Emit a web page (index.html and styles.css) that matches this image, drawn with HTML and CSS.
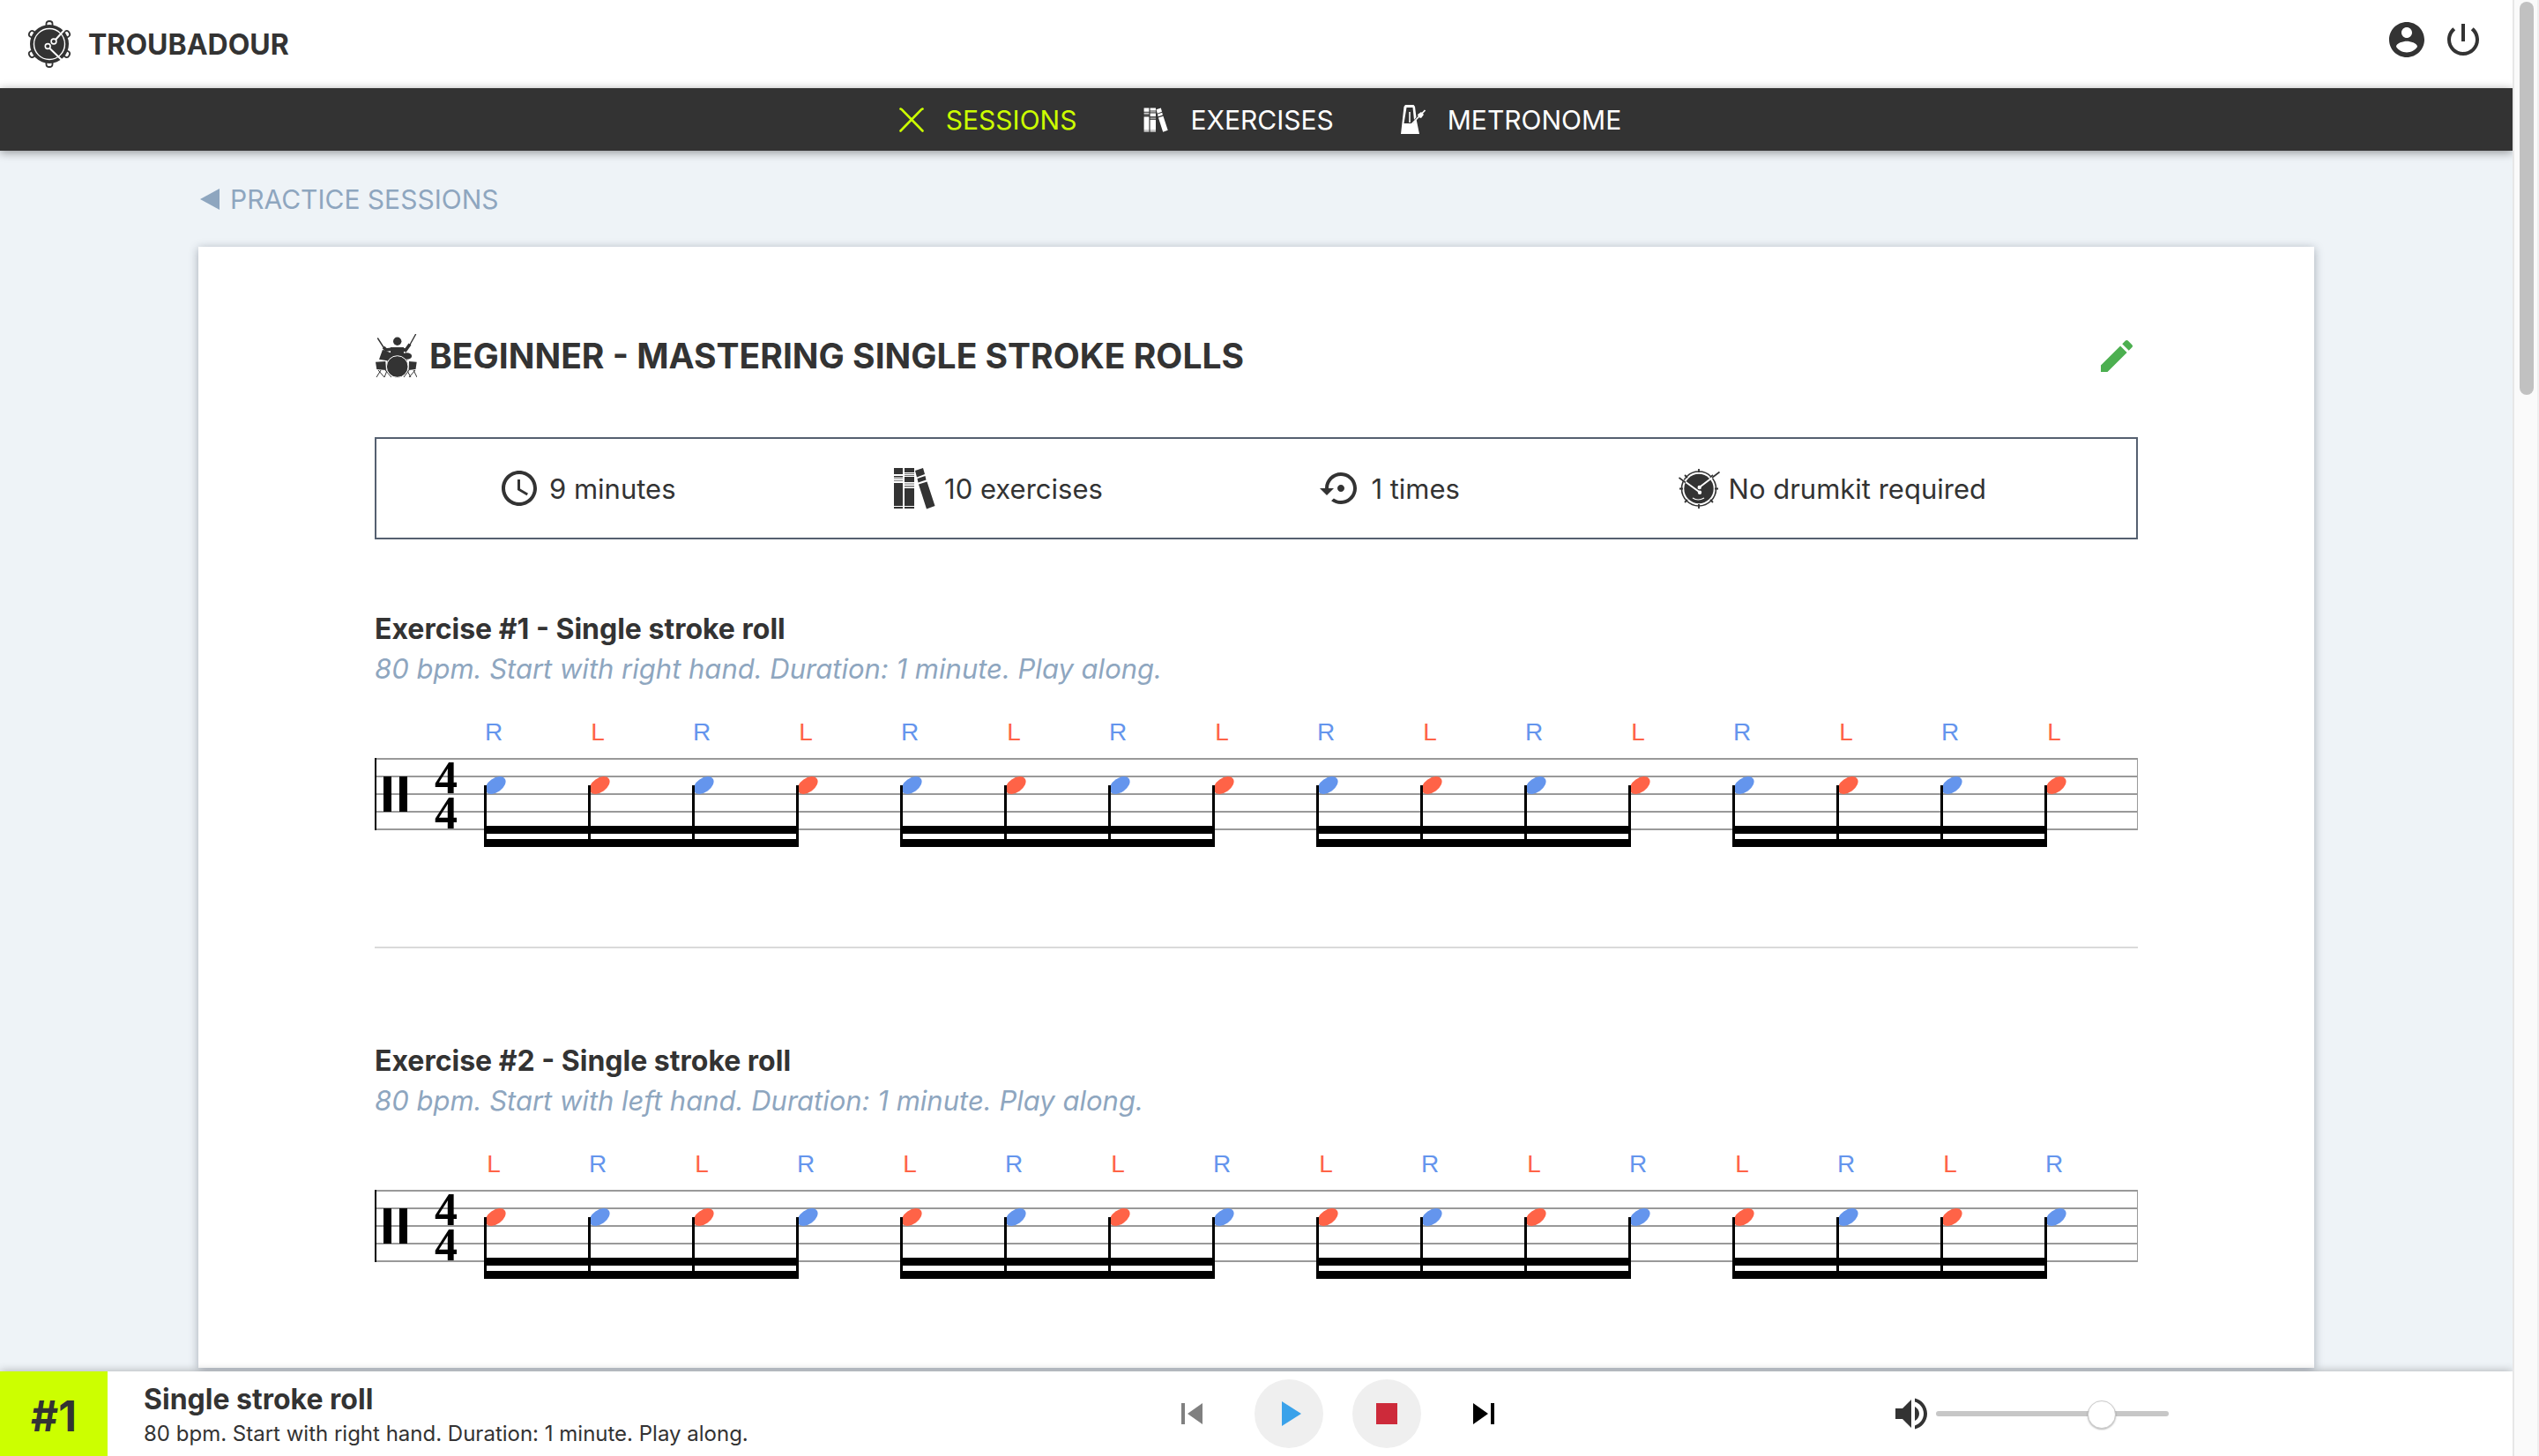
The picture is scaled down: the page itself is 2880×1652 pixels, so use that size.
FILE: index.html
```html
<!DOCTYPE html>
<html lang="en">
<head>
<meta charset="utf-8">
<title>Troubadour</title>
<link rel="stylesheet" href="styles.css">
</head>
<body>
<svg class="sprite" aria-hidden="true">
  <symbol id="i-books" viewBox="0 0 48 48">
    <path d="M1 1h10v7H1zM1 10h10v1.500H1zM1 18h10v26H1zM1 45h10v2H1z"/>
    <path d="M1 12.500h10v1H1zM1 15h10v1H1z" opacity=".6"/>
    <path d="M13 1h11v5H13zM13 11h11v6H13zM13 24h11v20H13zM13 45h11v2H13z"/>
    <path d="M13 7h11v1H13zM13 9h11v1H13zM13 18.500h11v1H13zM13 21h11v1.500H13z" opacity=".7"/>
    <path d="M25 4l9-3 2 7-9 3.500zM27.500 13l9-3 1 4.500-9 3zM29 19.500l9.500-3L47.500 44l-9.500 3.500z"/>
  </symbol>
</svg>
<div class="app">
  <div class="shell">
    <header class="topbar">
      <a class="brand" href="#">
        <svg class="logo" viewBox="0 0 50 54" fill="none">
          <g id="lugs" stroke="#333" stroke-width="1.800">
            <path d="M21.500 6V3.800Q21.500 1 25 1t3.500 2.800V6"/>
            <path d="M21.500 6V3.800Q21.500 1 25 1t3.500 2.800V6" transform="rotate(60 25 27)"/>
            <path d="M21.500 6V3.800Q21.500 1 25 1t3.500 2.800V6" transform="rotate(120 25 27)"/>
            <path d="M21.500 6V3.800Q21.500 1 25 1t3.500 2.800V6" transform="rotate(180 25 27)"/>
            <path d="M21.500 6V3.800Q21.500 1 25 1t3.500 2.800V6" transform="rotate(240 25 27)"/>
            <path d="M21.500 6V3.800Q21.500 1 25 1t3.500 2.800V6" transform="rotate(300 25 27)"/>
          </g>
          <circle cx="25" cy="27" r="22" fill="#333"/>
          <circle cx="25" cy="27" r="17.500" stroke="#fff" stroke-width="1.400"/>
          <path d="M25 31.500L39 45M32 22L42 11" stroke="#fff" stroke-width="2"/>
          <circle cx="23.200" cy="29.500" r="2.900" fill="#333" stroke="#fff" stroke-width="1.600"/>
          <circle cx="30" cy="24" r="2.900" fill="#333" stroke="#fff" stroke-width="1.600"/>
        </svg>
        <span>TROUBADOUR</span>
      </a>
      <div class="account">
        <button type="button" aria-label="Account"><svg viewBox="0 0 24 24"><path d="M12 2C6.480 2 2 6.480 2 12s4.480 10 10 10 10-4.480 10-10S17.520 2 12 2zm0 3c1.660 0 3 1.340 3 3s-1.340 3-3 3-3-1.340-3-3 1.340-3 3-3zm0 14.200c-2.500 0-4.710-1.280-6-3.220.030-1.990 4-3.080 6-3.080 1.990 0 5.970 1.090 6 3.080-1.290 1.940-3.500 3.220-6 3.220z"/></svg></button>
        <button type="button" aria-label="Log out"><svg viewBox="0 0 24 24"><path d="M13 3h-2v10h2V3zm4.830 2.170l-1.420 1.420C17.990 7.860 19 9.810 19 12c0 3.870-3.130 7-7 7s-7-3.130-7-7c0-2.190 1.010-4.140 2.580-5.420L6.170 5.170C4.230 6.820 3 9.260 3 12c0 4.970 4.030 9 9 9s9-4.030 9-9c0-2.740-1.230-5.180-3.170-6.830z"/></svg></button>
      </div>
    </header>

    <nav class="mainnav">
      <a class="active" href="#"><svg viewBox="0 0 28 28" fill="none" stroke="currentColor" stroke-width="2.600" stroke-linecap="round"><path d="M1.500 1.500Q3 2 4 3.500L26.500 26.500M26.500 1.500Q25 2 24 3.500L1.500 26.500"/></svg><span>SESSIONS</span></a>
      <a href="#"><svg><use href="#i-books"/></svg><span>EXERCISES</span></a>
      <a href="#"><svg class="tall" viewBox="0 0 28 33"><path fill-rule="evenodd" d="M5 0h9.500L16 2l1.500 12-2.500 3L13.500 3h-7L3.500 21H14l3.500-5L21 33H0L3.500 2zM9.200 8h1.600v12H9.200z"/><path d="M12 22L27.500 6" stroke="#fff" stroke-width="1.600"/><path d="M19 11l4-3 3 3-3 4-3-1z"/></svg><span>METRONOME</span></a>
    </nav>

    <main class="page">
      <div class="crumb"><a href="#"><svg viewBox="0 0 22 24"><path d="M22 0v24L0 12z"/></svg><span>PRACTICE SESSIONS</span></a></div>
      <article class="card">
        <div class="title-row">
          <svg class="drummer" viewBox="0 0 48 50">
            <g fill="none" stroke="#333">
              <path d="M3.300 4.500L12 18M46.700 0L40 12" stroke-width="1.400"/>
              <path d="M10 15l3 3 7-1M31 17l4 1.500 5-7" stroke-width="3.600"/>
              <path d="M7 41l-5 8M4 41l7 8M15 39l-4 10M12 41l7 8M44 41l4 8M46 41l-7 8M36 40l5 9M39 41l-6 8M15 30v10M36 29v12" stroke-width="1"/>
            </g>
            <circle cx="25.700" cy="8.300" r="4.700"/>
            <path d="M18 15h15v8l-4 4h-7l-4-5zM9 17.700l14.300 5.600L19 31 5 28.700zM1 31.700L12.300 31l.7 10-10.700-1zM39 31l8.700.7-1.200 8.300-8 1z"/>
            <ellipse cx="36.300" cy="25" rx="5.800" ry="3.800"/>
            <circle cx="25.700" cy="37" r="12.300" stroke="#fff"/>
          </svg>
          <h1>BEGINNER - MASTERING SINGLE STROKE ROLLS</h1>
          <button class="edit" type="button" aria-label="Edit session"><svg viewBox="0 0 24 24"><path d="M3 17.250V21h3.750L17.810 9.940l-3.750-3.750L3 17.250zM20.710 7.040c.390-.390.390-1.020 0-1.410l-2.340-2.340c-.390-.390-1.020-.390-1.410 0l-1.830 1.830 3.750 3.750 1.830-1.830z"/></svg></button>
        </div>

        <ul class="stats">
          <li><svg viewBox="0 0 24 24"><path d="M11.990 2C6.470 2 2 6.480 2 12s4.470 10 9.990 10C17.520 22 22 17.520 22 12S17.520 2 11.990 2zM12 20c-4.420 0-8-3.580-8-8s3.580-8 8-8 8 3.580 8 8-3.580 8-8 8zm.500-13H11v6l5.250 3.150.750-1.230-4.500-2.670z"/></svg><span>9 minutes</span></li>
          <li><svg><use href="#i-books"/></svg><span>10 exercises</span></li>
          <li><svg viewBox="0 0 24 24"><path d="M14 12c0-1.100-.900-2-2-2s-2 .900-2 2 .900 2 2 2 2-.900 2-2zm-2-9c-4.970 0-9 4.030-9 9H0l4 4 4-4H5c0-3.870 3.130-7 7-7s7 3.130 7 7-3.130 7-7 7c-1.510 0-2.910-.490-4.060-1.300l-1.420 1.440C8.040 20.300 9.940 21 12 21c4.970 0 9-4.030 9-9s-4.030-9-9-9z"/></svg><span>1 times</span></li>
          <li><svg viewBox="0 0 48 48" fill="none">
            <path d="M24 2v4M24 42v5M2 24.500h4M42 24.500h4M8 9l3 3M40 9l-3 3M8 40l3-3M40 40l-3-3" stroke="#333" stroke-width="1.800"/>
            <circle cx="24" cy="24.500" r="19.500" stroke="#333" stroke-width="1.600"/>
            <circle cx="24" cy="24.500" r="16.700" fill="#333"/>
            <path d="M5 14L25 28.500M43 9L24.500 23" stroke="#fff" stroke-width="2"/>
            <path d="M1.500 12L9 17.500M47.500 5.500L39 12" stroke="#333" stroke-width="1.600"/>
            <circle cx="25" cy="28.700" r="2.200" fill="#fff"/><circle cx="24.700" cy="23" r="2.200" fill="#fff"/>
            <path d="M17 35q6 4 13 0" stroke="#fff" stroke-width="1.200"/>
          </svg><span>No drumkit required</span></li>
        </ul>

        <section class="exercise">
          <h2>Exercise #1 - Single stroke roll</h2>
          <p>80 bpm. Start with right hand. Duration: 1 minute. Play along.</p>
          <svg class="score" viewBox="0 0 2000 180" data-sticking="RLRLRLRLRLRLRLRL"></svg>
        </section>
        <hr>
        <section class="exercise">
          <h2>Exercise #2 - Single stroke roll</h2>
          <p>80 bpm. Start with left hand. Duration: 1 minute. Play along.</p>
          <svg class="score" viewBox="0 0 2000 180" data-sticking="LRLRLRLRLRLRLRLR"></svg>
        </section>
      </article>
    </main>

    <footer class="player">
      <div class="now">
        <div class="number">#1</div>
        <div class="now-text">
          <strong>Single stroke roll</strong>
          <span>80 bpm. Start with right hand. Duration: 1 minute. Play along.</span>
        </div>
      </div>
      <div class="controls">
        <button class="skip prev" type="button" aria-label="Previous" disabled><svg viewBox="0 0 24 24"><path d="M6 6h2v12H6zm3.500 6l8.500 6V6z"/></svg></button>
        <button class="round play" type="button" aria-label="Play"><svg viewBox="0 0 24 24"><path d="M8 5v14l11-7z"/></svg></button>
        <button class="round stop" type="button" aria-label="Stop"><svg viewBox="0 0 24 24"><path d="M6 6h12v12H6z"/></svg></button>
        <button class="skip next" type="button" aria-label="Next"><svg viewBox="0 0 24 24"><path d="M6 18l8.500-6L6 6v12zM16 6v12h2V6h-2z"/></svg></button>
      </div>
      <div class="volume">
        <svg viewBox="0 0 24 24"><path d="M3 9v6h4l5 5V4L7 9H3zm13.500 3c0-1.770-1.020-3.290-2.500-4.030v8.050c1.480-.730 2.500-2.250 2.500-4.020zM14 3.230v2.060c2.890.860 5 3.540 5 6.710s-2.110 5.850-5 6.710v2.060c4.010-.910 7-4.490 7-8.770s-2.990-7.860-7-8.770z"/></svg>
        <input type="range" min="0" max="100" value="74" aria-label="Volume">
      </div>
    </footer>
  </div>
  <div class="scrollbar" aria-hidden="true"><div class="thumb"></div></div>
</div>
<script src="script.js"></script>
</body>
</html>
```

FILE: styles.css
```css
* { box-sizing: border-box; }
body {
  margin: 0;
  color: #333;
  background: #eef3f7;
  font-family: Inter, "Liberation Sans", sans-serif;
  font-size: 31px;
}
h1, h2, p, ul { margin: 0; padding: 0; }
a { color: inherit; text-decoration: none; }
button { border: 0; padding: 0; background: none; color: inherit; display: flex; align-items: center; justify-content: center; }
svg { display: block; width: 48px; height: 48px; fill: currentColor; flex: none; }
svg[fill="none"] { fill: none; }
.sprite { position: absolute; width: 0; height: 0; }

.app { display: flex; height: 100vh; }
.shell { flex: 1; min-width: 0; display: flex; flex-direction: column; overflow: hidden; }
.scrollbar { width: 30px; padding: 2px 4px 0 6px; background: #fafafa; border-left: 2px solid #e7e7e7; border-right: 2px solid #efefef; }
.thumb { width: 16px; height: 27%; border-radius: 8px; background: #c1c1c1; }

.topbar { flex: none; height: 100px; padding: 0 32px 0 31px; display: flex; align-items: center; justify-content: space-between; background: #fff; }
.brand { display: flex; align-items: center; gap: 19px; font-size: 32px; font-weight: 700; }
.logo { width: 50px; height: 54px; }
.account { display: flex; gap: 16px; padding-bottom: 10px; }

.mainnav { flex: none; height: 71px; padding-left: 9px; display: flex; align-items: center; justify-content: center; gap: 76px; background: #333; color: #fff; font-size: 30px; box-shadow: 0 2px 10px rgba(0, 0, 0, .4); z-index: 1; position: relative; }
.mainnav a { display: flex; align-items: center; gap: 25px; }
.mainnav svg { width: 28px; height: 28px; }
.mainnav .tall { height: 33px; }
.mainnav .active { color: #cf0; }

.page { flex: 1; min-height: 0; overflow: hidden; padding: 0 225px; }
.crumb { height: 109px; padding-left: 2px; display: flex; align-items: center; color: #8ea6bf; font-size: 30px; }
.crumb a { display: flex; align-items: center; gap: 12px; }
.crumb svg { width: 22px; height: 24px; }
.card { max-width: 2400px; margin: 0 auto; padding: 100px 200px; background: #fff; box-shadow: 0 2px 10px rgba(50, 60, 80, .4); }
.title-row { display: flex; align-items: center; height: 48px; }
.drummer { height: 50px; }
h1 { flex: 1; padding-left: 14px; font-size: 39px; line-height: 48px; font-weight: 700; }
.edit { color: #4caf50; }

.stats { list-style: none; margin-top: 68px; height: 116px; border: 2px solid #556070; padding: 0 170px 0 138px; display: flex; align-items: center; justify-content: space-between; }
.stats li { display: flex; align-items: center; gap: 10px; }
.exercise h2 { font-size: 32px; line-height: 44px; }
.exercise p { line-height: 46px; font-style: italic; color: #8ea6bf; }
.stats + .exercise { margin-top: 80px; }
hr { height: 2px; margin: 112px 0 106px; border: 0; background: #dadada; }

.score { width: 100%; height: auto; color: #000; overflow: visible; }
.score text { font-family: "Liberation Sans", Arial, sans-serif; font-size: 28px; text-anchor: middle; }
.score .meter { font-family: "Liberation Serif", serif; font-size: 52px; font-weight: 700; }
.score .line { fill: #999; }
.score .R { fill: #6495ed; }
.score .L { fill: #ff6347; }

.player { flex: none; height: 96px; display: grid; grid-template-columns: 7fr 2fr 6fr; background: #fff; box-shadow: 0 0 10px rgba(0, 0, 0, .3); z-index: 1; position: relative; }
.now { display: flex; }
.number { width: 122px; display: flex; align-items: center; justify-content: center; background: #cf0; font-size: 48px; font-weight: 700; padding-top: 4px; }
.now-text { display: flex; flex-direction: column; padding: 12px 0 0 41px; }
.now-text strong { font-size: 32px; line-height: 40px; }
.now-text span { font-size: 24px; line-height: 38px; }
.controls { display: flex; align-items: center; justify-content: center; gap: 33px; padding-right: 4px; }
.skip { width: 62px; color: #000; }
.prev { justify-content: flex-start; color: #808080; }
.next { justify-content: flex-end; }
.round { width: 78px; height: 78px; border-radius: 50%; background: #efefef; }
.play { color: #3aa2ea; }
.stop { color: #cd2a3a; }
.volume { display: flex; align-items: center; justify-content: flex-end; gap: 4px; padding-right: 390px; }
input[type="range"] { appearance: none; -webkit-appearance: none; width: 264px; height: 32px; margin: 0; background: none; }
input[type="range"]::-webkit-slider-runnable-track { height: 6px; border-radius: 3px; background: #c7c7c7; }
input[type="range"]::-webkit-slider-thumb { -webkit-appearance: none; width: 32px; height: 32px; margin-top: -12px; border: 1px solid #ccc; border-radius: 50%; background: #fff; box-shadow: 0 1px 2px rgba(0, 0, 0, .3); }
```

FILE: script.js
```js
// Draws one bar of sixteenth notes on a percussion staff.
const STEP = 118;

function drawScore(svg) {
  const hands = [...svg.dataset.sticking];
  let out = '';
  for (let i = 0; i < 5; i++) {
    out += `<rect class="line" x="0" y="${78 + i * 20}" width="2000" height="2"/>`;
  }
  out += '<rect x="0" y="78" width="2" height="82"/><rect class="line" x="1999" y="78" width="1" height="82"/>';
  out += '<rect x="10" y="99" width="9" height="40"/><rect x="28" y="99" width="9" height="40"/>';
  out += '<text class="meter" x="81" y="118">4</text><text class="meter" x="81" y="158">4</text>';
  hands.forEach((hand, i) => {
    const x = 124 + i * STEP;
    out += `<text class="${hand}" x="${x + 11}" y="58">${hand}</text>`;
    out += `<ellipse class="${hand}" cx="${x + 13}" cy="109" rx="13" ry="8" transform="rotate(-35 ${x + 13} 109)"/>`;
    out += `<rect x="${x}" y="109" width="3" height="69"/>`;
    if (i % 4 === 0) {
      const w = STEP * 3 + 3;
      out += `<rect x="${x}" y="155" width="${w}" height="9"/><rect x="${x}" y="170" width="${w}" height="9"/>`;
    }
  });
  svg.innerHTML = out;
}

document.querySelectorAll('.score').forEach(drawScore);
```
